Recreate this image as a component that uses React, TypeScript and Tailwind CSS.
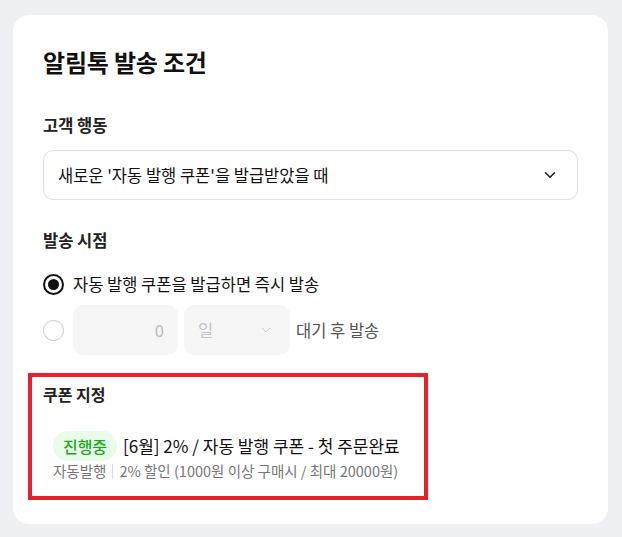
import { ChevronDown } from 'lucide-react'

export default function App() {
  return (
    <div
      className="min-h-[537px] w-[622px] bg-[#eef0f4] pt-[15px] pl-[13px]"
      style={{ fontFamily: '"Noto Sans CJK KR", "Noto Sans", sans-serif' }}
    >
      <div className="w-[595px] h-[509px] rounded-[16px] bg-white px-[30px] pt-[31px]">
        <h1 className="h-8 leading-8 text-[24px] font-bold text-[#111] tracking-[-0.2px]">알림톡 발송 조건</h1>

        {/* 고객 행동 */}
        <div className="mt-[35px] h-6 leading-6 text-[16.5px] font-bold text-[#222]">고객 행동</div>
        <div className="mt-[13px] h-[50px] w-[535px] rounded-[10px] border border-[#dedfe3] flex items-center justify-between pl-[14px] pr-[18px]">
          <span className="text-[16.5px] text-[#111]">새로운 '자동 발행 쿠폰'을 발급받았을 때</span>
          <ChevronDown className="w-[18px] h-[18px] text-[#222]" strokeWidth={2} />
        </div>

        {/* 발송 시점 */}
        <div className="mt-[28px] h-6 leading-6 text-[16.5px] font-bold text-[#222]">발송 시점</div>
        <div className="mt-[20px] h-6 flex items-center gap-[9px]">
          <span className="w-[21px] h-[21px] rounded-full border-2 border-[#111] flex items-center justify-center">
            <span className="w-[11px] h-[11px] rounded-full bg-[#111]" />
          </span>
          <span className="text-[16.5px] text-[#111]">자동 발행 쿠폰을 발급하면 즉시 발송</span>
        </div>
        <div className="mt-[9px] h-[50px] flex items-center">
          <span className="w-[21px] h-[21px] rounded-full border border-[#c8c9cc] mr-[9px]" />
          <div className="w-[105px] h-[50px] rounded-[10px] bg-[#f6f6f7] flex items-center justify-end pr-[14px] text-[16.5px] text-[#b8b9bc]">
            0
          </div>
          <div className="ml-[6px] w-[106px] h-[50px] rounded-[10px] bg-[#f6f6f7] flex items-center justify-between pl-[14px] pr-[16px] text-[16.5px] text-[#c3c4c7]">
            <span>일</span>
            <ChevronDown className="w-4 h-4 text-[#c8c9cc]" strokeWidth={1.5} />
          </div>
          <span className="ml-[6px] text-[16.5px] text-[#555]">대기 후 발송</span>
        </div>

        {/* 쿠폰 지정 */}
        <div className="mt-[18px] -ml-[15px] w-[400px] border-4 border-[#e8202a] pl-[11px] pt-[6px] pb-[15px]">
          <div className="h-[22px] leading-[22px] text-[16px] font-bold text-[#222]">쿠폰 지정</div>
          <div className="ml-[10px] mt-[26px]">
            <div className="flex items-center gap-[6px]">
              <span className="h-[30px] w-[64px] rounded-full bg-[#e9fbe9] flex items-center justify-center text-[16px] text-[#1caa1c] font-medium">
                진행중
              </span>
              <span className="text-[17px] text-[#111]">[6월] 2% / 자동 발행 쿠폰 - 첫 주문완료</span>
            </div>
            <div className="h-5 flex items-center text-[14.5px] text-[#777]">
              <span>자동발행</span>
              <span className="mx-[6px] w-px h-[15px] bg-[#dcdcdc]" />
              <span>2% 할인 (1000원 이상 구매시 / 최대 20000원)</span>
            </div>
          </div>
        </div>
      </div>
    </div>
  )
}
